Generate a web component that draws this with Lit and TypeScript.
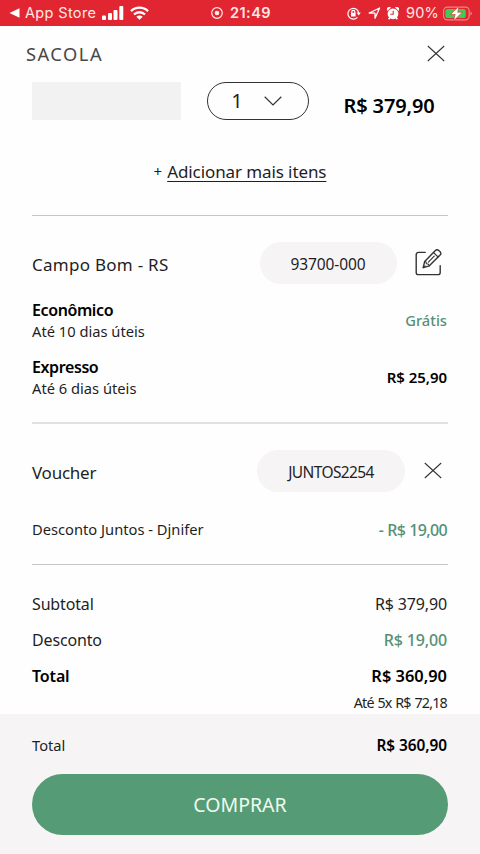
import { LitElement, html, css } from "lit";
import { customElement } from "lit/decorators.js";

@customElement("status-bar")
class StatusBar extends LitElement {
  static styles = css`
    :host { display: grid; grid-template-columns: 1fr auto 1fr; align-items: center; height: 25.5px; box-sizing: border-box;
      padding: 1px 7px 0 9px; background: #e12531; color: #fde9e4; font-family: Inter, "Liberation Sans", sans-serif; }
    .side { display: flex; align-items: center; }
    .end { justify-content: flex-end; }
    svg { display: block; flex: none; }
    .back { margin-right: 5px; }
    .label { font-size: 14.5px; letter-spacing: 0.35px; margin-right: 6px; line-height: 20px; }
    .wifi { margin-left: 6px; }
    .clock { display: flex; align-items: center; gap: 7px; font-size: 14.5px; font-weight: 600; letter-spacing: 0.5px; line-height: 20px; }
    .lock { margin-right: 7px; }
    .nav { margin-right: 6px; }
    .alarm { margin-right: 7px; }
    .pct { font-size: 14.5px; letter-spacing: 0.2px; margin-right: 4px; line-height: 20px; }
  `;
  render() {
    return html`
      <div class="side">
        <svg class="back" width="11" height="10" viewBox="0 0 11 10"><path d="M0.5 5 10.5 0.3V9.7Z" fill="#fff" /></svg>
        <span class="label">App Store</span>
        <svg width="22" height="14" viewBox="0 0 22 14" fill="#fff">
          <rect x="0" y="9.5" width="4" height="4.5" rx="1" /><rect x="6" y="7" width="4" height="7" rx="1" />
          <rect x="11.5" y="4" width="4" height="10" rx="1" /><rect x="17.3" y="0" width="4" height="14" rx="1" />
        </svg>
        <svg class="wifi" width="19" height="14" viewBox="0 0 19 14" fill="none" stroke="#fff" stroke-width="2.3">
          <path d="M1 5.1a12.2 12.2 0 0 1 17 0" /><path d="M4 8.5a7.8 7.8 0 0 1 11 0" />
          <path d="M9.5 13.8 6.3 10.7a4.6 4.6 0 0 1 6.4 0Z" fill="#fff" stroke="none" />
        </svg>
      </div>
      <div class="clock">
        <svg width="12" height="12" viewBox="0 0 12 12"><circle cx="6" cy="6" r="5.3" fill="none" stroke="#fde9e4" stroke-width="1.2" /><circle cx="6" cy="6" r="2.3" fill="#fde9e4" /></svg>
        <span>21:49</span>
      </div>
      <div class="side end">
        <svg class="lock" width="14" height="13" viewBox="0 0 14 13" fill="none" stroke="#fff" stroke-width="1.2">
          <path d="M10.4 10.3A5.4 5.4 0 1 1 11.7 5.9" /><path d="M9.6 5.6h4.2L11.8 8.5Z" fill="#fff" stroke="none" />
          <rect x="4" y="5.8" width="4.6" height="3.7" fill="#fff" stroke="none" /><path d="M4.8 6V4.8a1.5 1.5 0 0 1 3 0V6" />
        </svg>
        <svg class="nav" width="13" height="12" viewBox="0 0 13 12"><path d="M1.2 6 11.6 1 7 11.2V6.2Z" fill="none" stroke="#fff" stroke-width="1.3" stroke-linejoin="round" /></svg>
        <svg class="alarm" width="12" height="13" viewBox="0 0 12 13">
          <path d="M0.7 3.6a2 2 0 0 1 3-2.8M11.3 3.6a2 2 0 0 0-3-2.8" fill="#fff" stroke="#fff" />
          <circle cx="6" cy="6.8" r="5.4" fill="#fff" /><path d="M1.6 12.3l1.6-2M10.4 12.3l-1.6-2" stroke="#fff" stroke-width="1.6" />
          <path d="M6.2 3.8v3.4H3.4" fill="none" stroke="#e12531" stroke-width="1.1" />
        </svg>
        <span class="pct">90%</span>
        <svg width="30" height="15" viewBox="0 0 30 15">
          <rect x="0.6" y="1.1" width="25.6" height="12.8" rx="3.8" fill="none" stroke="#ee8a86" stroke-width="1.1" />
          <rect x="2.4" y="2.9" width="20.3" height="9.2" rx="2" fill="#3fcb56" />
          <path d="M27.5 5.6c1.8.6 1.8 3.4 0 4Z" fill="#ee8a86" />
          <path d="M16 0.3 7.6 8.5h4.6l-1.6 6.3L19.4 6.2h-4.7Z" fill="#fff" stroke="#e12531" stroke-width=".6" />
        </svg>
      </div>`;
  }
}

@customElement("app-root")
class AppRoot extends LitElement {
  static styles = css`
    :host { display: flex; flex-direction: column; width: 480px; height: 854px; overflow: hidden; background: #fefefe;
      color: #1f1f1f; font-family: "Noto Sans", "Open Sans", sans-serif; }
    * { box-sizing: border-box; }
    svg { display: block; flex: none; fill: none; stroke: #333; }
    span, a { white-space: nowrap; line-height: 1; }
    header { display: flex; align-items: center; justify-content: space-between; height: 56px; padding: 0 35px 0 26px; }
    .title { font-size: 18.3px; font-weight: 400; letter-spacing: 1.5px; color: #484848; padding-top: 1px; }
    main { display: flex; flex-direction: column; height: 632.5px; padding: 0 33px 0 32px; }
    .row { display: flex; align-items: center; justify-content: space-between; }
    .rule { height: 1px; background: #c6c4c5; margin-right: -1px; flex: none; }
    .rule.thick { height: 2px; background: #e1dfe0; margin-top: 16.5px; }
    .item { height: 38px; }
    .thumb { width: 149px; height: 38px; background: #f2f2f2; }
    .qty { display: flex; align-items: center; justify-content: center; gap: 21px; width: 102px; height: 38px; margin-left: 26px;
      border: 1.3px solid #333; border-radius: 19px; font-size: 20px; padding-right: 3px; }
    .price { font-size: 20px; font-weight: 600; letter-spacing: -0.15px; color: #000; margin: 11px 12.5px 0 auto; }
    .more { display: flex; justify-content: center; align-items: center; height: 95px; padding: 9px 0 0 1px; gap: 5px; font-size: 17px; flex: none; }
    .more a { text-decoration: underline; text-decoration-thickness: 1px; text-underline-offset: 2.5px; letter-spacing: -.1px; color: #1f1f1f; }
    .plus { font-size: 15px; }
    .lg { font-size: 17px; letter-spacing: .27px; padding-top: 3px; }
    .lg.tight { letter-spacing: -.25px; }
    .md { font-size: 16px; letter-spacing: -.15px; }
    .sm { font-size: 14.7px; letter-spacing: 0; }
    .strong { font-weight: 600; color: #000; }
    .name { letter-spacing: -.4px; }
    .fee { font-size: 15px; font-weight: 600; color: #000; letter-spacing: -.05px; }
    .amount { font-size: 16.4px; }
    .off { letter-spacing: -.65px; word-spacing: .5px; font-size: 16px; }
    .green { color: #559076; font-weight: 500; }
    .pill { display: flex; align-items: center; justify-content: center; height: 42px; border-radius: 21px; background: #f6f4f5; font-size: 15.5px; margin-left: auto; padding-top: 4px; }
    .zip { width: 137px; margin-right: 18.5px; letter-spacing: -.1px; }
    .code { width: 148px; margin-right: 19px; letter-spacing: -.6px; }
    .place { height: 42px; margin-top: 26px; padding-right: 5px; flex: none; }
    .ship { height: 57px; flex: none; }
    .ship.first { margin-top: 8px; }
    .ship > div { display: flex; flex-direction: column; gap: 6px; }
    .voucher { height: 42px; margin-top: 25.5px; padding-right: 5px; flex: none; }
    .disc { height: 36px; margin: 20px 0 16px; flex: none; }
    .sum { height: 36px; flex: none; }
    .sum.first { margin-top: 21.5px; }
    .parts { display: flex; justify-content: flex-end; align-items: center; height: 18px; font-size: 14.3px; letter-spacing: -.8px; word-spacing: .8px; }
    footer { flex: 1; background: #f6f4f5; padding: 14px 32px 0; }
    footer .row { height: 34px; padding: 1px 1px 0 0; }
    .total { font-size: 15.4px; font-weight: 600; letter-spacing: -.05px; color: #000; }
    .buy { display: flex; align-items: center; justify-content: center; width: 416px; height: 61.5px; margin-top: 11.5px; padding: 0; border: 0;
      border-radius: 31px; background: #559b75; color: #eefbee; font: 400 19.5px "Noto Sans", sans-serif; }
  `;
  private cross() {
    return html`<svg width="18" height="17" viewBox="0 0 18 17"><path d="M.8 1 17.2 16M17.2 1 .8 16" stroke-width="1.05" /></svg>`;
  }
  render() {
    return html`
      <status-bar></status-bar>
      <header><span class="title">SACOLA</span>${this.cross()}</header>
      <main>
        <div class="row item">
          <div class="thumb"></div>
          <div class="qty"><span class="n">1</span><svg width="18" height="10" viewBox="0 0 18 10"><path d="M.7.8 9 9 17.3.8" stroke-width="1.2" /></svg></div>
          <span class="price">R$ 379,90</span>
        </div>
        <div class="more"><span class="plus">+</span><a class="add">Adicionar mais itens</a></div>
        <div class="rule"></div>
        <div class="row place">
          <span class="lg">Campo Bom - RS</span>
          <span class="pill zip">93700-000</span>
          <svg width="27" height="27" viewBox="0 0 27 27" stroke-width="1.4" stroke-linecap="round" stroke-linejoin="round">
            <path d="M10.2 3.4H3.4a2.2 2.2 0 0 0-2.2 2.2V23.4a2.2 2.2 0 0 0 2.2 2.2H23a2.2 2.2 0 0 0 2.2-2.2V16.8" />
            <path d="M8.2 18.6 9.7 12.4 20.4 1.5a2.3 2.3 0 0 1 3.4 0l1.3 1.2a2.3 2.3 0 0 1 0 3.4L14.3 16.8Z" />
            <path d="M18.5 3.5 23.1 8M9.7 12.4l1.4.6.3 1.8 1.7.2 1.2 1.8M13.4 13.1 19.2 7.2M8.2 18.6l1.8-1.7" stroke-width="1.1" />
          </svg>
        </div>
        <div class="row ship first"><div><span class="md strong name">Econômico</span><span class="sm">Até 10 dias úteis</span></div><span class="sm green">Grátis</span></div>
        <div class="row ship"><div><span class="md strong name">Expresso</span><span class="sm">Até 6 dias úteis</span></div><span class="fee">R$ 25,90</span></div>
        <div class="rule thick"></div>
        <div class="row voucher"><span class="lg tight">Voucher</span><span class="pill code">JUNTOS2254</span>${this.cross()}</div>
        <div class="row disc"><span class="sm">Desconto Juntos - Djnifer</span><span class="off green">- R$ 19,00</span></div>
        <div class="rule"></div>
        <div class="row sum first"><span class="md">Subtotal</span><span class="md">R$ 379,90</span></div>
        <div class="row sum"><span class="md">Desconto</span><span class="md green">R$ 19,00</span></div>
        <div class="row sum"><span class="md strong">Total</span><span class="amount strong">R$ 360,90</span></div>
        <div class="parts"><span>Até 5x R$ 72,18</span></div>
      </main>
      <footer>
        <div class="row"><span class="sm">Total</span><span class="total">R$ 360,90</span></div>
        <button class="buy"><span>COMPRAR</span></button>
      </footer>`;
  }
}
